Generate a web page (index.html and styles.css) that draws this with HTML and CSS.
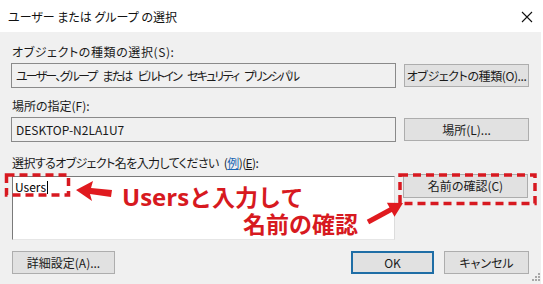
FILE: index.html
```html
<!DOCTYPE html>
<html lang="ja">
<head>
<meta charset="utf-8">
<link rel="stylesheet" href="styles.css">
</head>
<body>
<div class="window">
  <div class="titlebar">
    <span class="title">ユーザー または グループ の選択</span>
    <svg class="close" width="12" height="12" viewBox="0 0 12 12"><path d="M1 1L11 11M11 1L1 11" stroke="#111" stroke-width="1.1" fill="none"/></svg>
  </div>
  <div class="content">
    <div class="label l1">オブジェクトの種類の選択(S):</div>
    <div class="row r1">
      <div class="field f1">ユーザー、グループ または ビルトイン セキュリティ プリンシパル</div>
      <button class="btn b1">オブジェクトの種類(O)...</button>
    </div>
    <div class="label l2">場所の指定(F):</div>
    <div class="row r2">
      <div class="field">DESKTOP-N2LA1U7</div>
      <button class="btn">場所(L)...</button>
    </div>
    <div class="label l3">選択するオブジェクト名を入力してください (<span class="link">例</span>)(<u>E</u>):</div>
    <div class="row r3">
      <div class="textarea">Users<span class="caret"></span></div>
      <button class="btn">名前の確認(C)</button>
    </div>
    <div class="footer">
      <button class="btn adv">詳細設定(A)...</button>
      <div class="spacer"></div>
      <button class="btn ok">OK</button>
      <button class="btn cancel">キャンセル</button>
    </div>
  </div>
  <svg class="overlay" width="543" height="284" viewBox="0 0 543 284">
    <rect x="6.5" y="175" width="62" height="20" fill="none" stroke="#d71920" stroke-width="3.5" stroke-dasharray="8 5"/>
    <rect x="400" y="175" width="135" height="28.5" fill="none" stroke="#d71920" stroke-width="3.5" stroke-dasharray="8 5"/>
    <polygon points="76,190 93,181 91,188 112,190 111,197 90,194 92,201" fill="#e01a1f"/>
    <line x1="368" y1="222" x2="392" y2="209" stroke="#e01a1f" stroke-width="5"/>
    <polygon points="403,203 394.5,216.7 386.9,202.7" fill="#e01a1f"/>
    <g fill="#a8a8a8">
      <rect x="538" y="273" width="2" height="2"/>
      <rect x="535" y="276" width="2" height="2"/>
      <rect x="538" y="276" width="2" height="2"/>
      <rect x="532" y="279" width="2" height="2"/>
      <rect x="535" y="279" width="2" height="2"/>
      <rect x="538" y="279" width="2" height="2"/>
    </g>
  </svg>
  <div class="note n1"><span class="latin">Users</span>と入力して</div>
  <div class="note n2">名前の確認</div>
</div>
</body>
</html>
```
FILE: styles.css
```css
html, body {
  margin: 0;
  padding: 0;
  background: #ffffff;
}
.window {
  position: relative;
  width: 543px;
  height: 284px;
  font-family: "Noto Sans CJK JP", sans-serif;
  font-feature-settings: "palt";
  font-size: 12px;
  color: #1a1a1a;
  overflow: hidden;
}
.titlebar {
  height: 32px;
  display: flex;
  align-items: center;
  justify-content: space-between;
  padding: 0 10px 0 8px;
  background: #ffffff;
}
.title {
  font-size: 12px;
  color: #111;
}
.close {
  margin-top: 2px;
}
.content {
  width: 518px;
  height: 252px;
  padding: 0 12px 0 11px;
  background: #f0f0f0;
  box-sizing: content-box;
  display: flex;
  flex-direction: column;
}
.label {
  height: 16px;
  line-height: 16px;
  padding-left: 1px;
  white-space: nowrap;
}
.l1 { margin-top: 12px; letter-spacing: 0.6px; }
.l2 { margin-top: 10px; }
.l3 { margin-top: 13px; letter-spacing: -0.6px; word-spacing: 3px; }
.row {
  display: flex;
  gap: 8px;
  margin-top: 3px;
}
.r1, .r2 {
  align-items: center;
}
.field {
  width: 385px;
  height: 25px;
  box-sizing: border-box;
  border: 1px solid #8a8a8a;
  background: #f0f0f0;
  padding-left: 4px;
  line-height: 23px;
  white-space: nowrap;
}
.f1 {
  letter-spacing: -1.8px;
  word-spacing: 5px;
}
.btn {
  font: inherit;
  font-feature-settings: "palt";
  color: #1a1a1a;
  background: #e1e1e1;
  border: 1px solid #adadad;
  width: 125px;
  height: 23px;
  padding: 0;
  margin: 0;
  box-sizing: border-box;
  text-align: center;
  line-height: 20px;
  white-space: nowrap;
}
.b1 {
  letter-spacing: -0.4px;
}
.r3 {
  align-items: flex-start;
}
.r3 .btn {
  height: 24px;
}
.textarea {
  width: 383px;
  height: 64px;
  margin-top: 2px;
  margin-left: 1px;
  box-sizing: border-box;
  background: #ffffff;
  border-top: 1px solid #7a7a7a;
  border-left: 1px solid #7a7a7a;
  border-right: 1px solid #dcdcdc;
  border-bottom: 1px solid #e6e6e6;
  padding: 2px 0 0 2px;
  line-height: 15px;
  color: #000;
}
.caret {
  display: inline-block;
  width: 1px;
  height: 13px;
  background: #000;
  vertical-align: -2px;
  margin-left: 1px;
}
.link {
  color: #1a66b3;
  text-decoration: underline;
}
.footer {
  display: flex;
  gap: 10px;
  margin-top: 11px;
}
.spacer {
  flex: 1;
}
.adv {
  width: 103px;
  margin-left: 1px;
}
.ok {
  width: 83px;
  border: 2px solid #1f6ea6;
}
.cancel {
  width: 85px;
}
.overlay {
  position: absolute;
  left: 0;
  top: 0;
}
.note {
  position: absolute;
  color: #d71920;
  font-weight: bold;
  font-size: 23px;
  line-height: 24px;
  white-space: nowrap;
  font-feature-settings: normal;
}
.note .latin {
  font-family: "Open Sans", sans-serif;
  font-size: 24px;
}
.n1 {
  left: 122px;
  top: 184px;
}
.n2 {
  left: 243px;
  top: 211px;
}
```
